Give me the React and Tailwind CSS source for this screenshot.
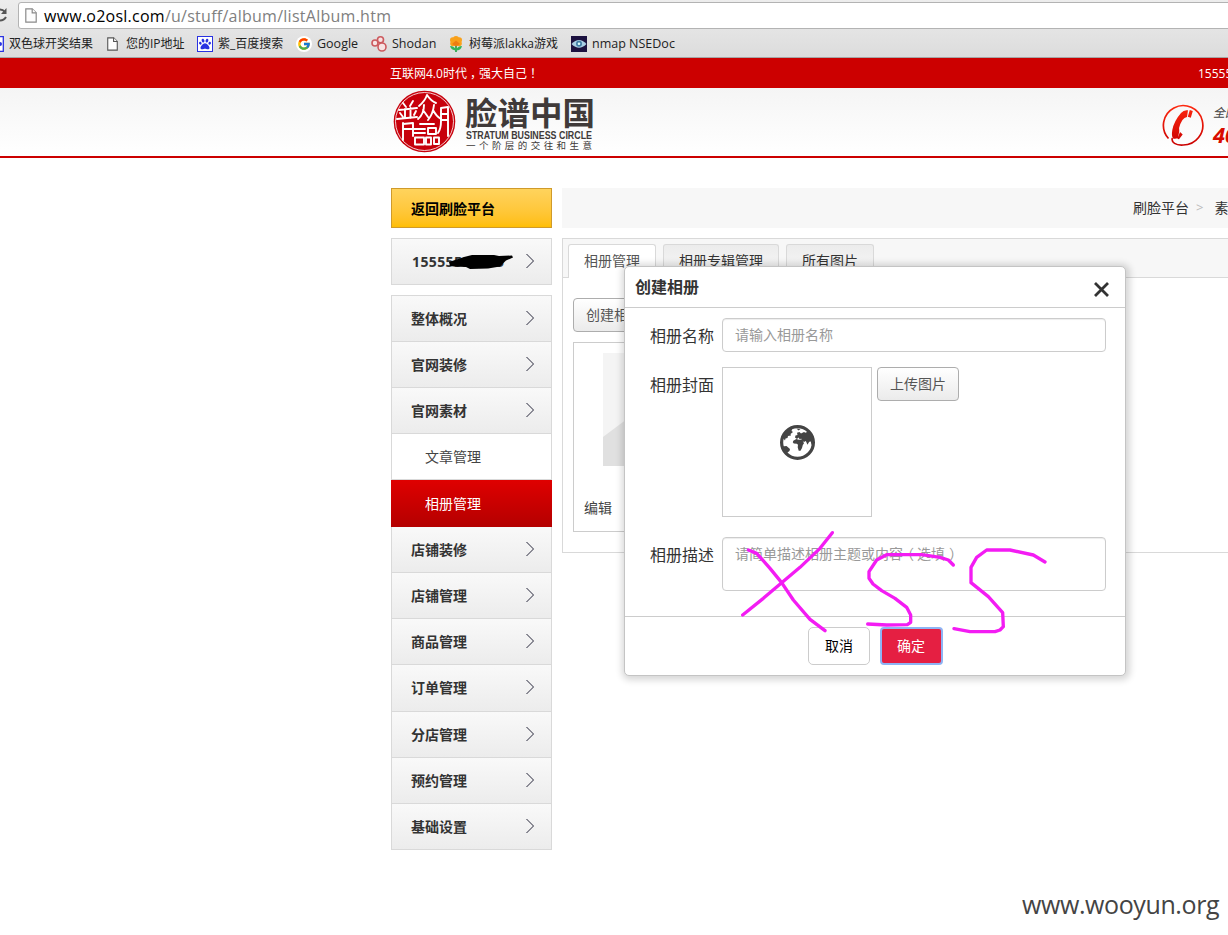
import React from "react";
import { FaPaw } from "react-icons/fa";
import { FcGoogle } from "react-icons/fc";

function PageIcon({ className }) {
  return (
    <svg className={className} viewBox="0 0 12 15" fill="#fdfdfd" stroke="currentColor" strokeWidth="1.2">
      <path d="M.8.8h6.4l4 4v9.4H.8z" />
      <path d="M7.2.8v4h4" />
    </svg>
  );
}

function BrowserBar() {
  return (
    <div className="h-[58px] border-b border-[#a6a6a6] bg-linear-to-b from-[#ededed] to-[#dcdcdc]">
      <div className="flex h-[30px] items-start pt-[2px]">
        <svg className="mt-[5px] h-4 w-[7px] shrink-0" viewBox="0 0 7 16" fill="none" stroke="#555" strokeWidth="2">
          <path d="M0 2.5Q3 2.500 5 5M0 13.500Q4 13.500 6 10" />
          <path d="M6.500 1v6H1z" fill="#555" stroke="none" />
        </svg>
        <div className="ml-[11px] flex h-[27px] w-[1300px] shrink-0 items-center rounded-[3px] border border-[#b3b3b3] bg-white pl-[6px]">
          <PageIcon className="h-[15px] w-3 text-[#8a8a8a]" />
          <span className="ml-[7px] text-[16px] leading-6 whitespace-nowrap text-[#808080]">
            <span className="tracking-[0.24px] text-black">www.o2osl.com</span>
            <span className="tracking-[0.26px]">/u/stuff/album/listAlbum.htm</span>
          </span>
        </div>
      </div>
      <div className="flex h-[27px] items-center pt-px text-[12px] whitespace-nowrap text-[#222]">
        <div className="flex w-[106px] shrink-0 items-center">
          <svg className="h-4 w-1" viewBox="0 0 4 16">
            <path d="M0 .7h3.300v14.600H0" fill="#fff" stroke="#2932e1" strokeWidth="1.300" />
            <circle cx="0" cy="8" r="2" fill="#2932e1" />
          </svg>
          <span className="ml-[5px]">双色球开奖结果</span>
        </div>
        <div className="flex w-[91px] shrink-0 items-center">
          <PageIcon className="ml-[1px] h-[14px] w-[11px] text-[#555]" />
          <span className="ml-[8px]">您的IP地址</span>
        </div>
        <div className="flex w-[99px] shrink-0 items-center">
          <span className="flex size-4 items-center justify-center border border-[#2932e1] bg-white">
            <FaPaw className="size-3 text-[#2932e1]" />
          </span>
          <span className="ml-[5px]">紫_百度搜索</span>
        </div>
        <div className="flex w-[75px] shrink-0 items-center">
          <span className="flex size-4 items-center justify-center rounded-full bg-white">
            <FcGoogle className="size-[14px]" />
          </span>
          <span className="ml-[5px] text-[12.5px]">Google</span>
        </div>
        <div className="flex w-[77px] shrink-0 items-center">
          <svg className="size-4" viewBox="0 0 16 16" fill="#f7e3e3" stroke="#cc5a5e" strokeWidth="1.600">
            <circle cx="4" cy="7" r="3" />
            <circle cx="9.500" cy="3.800" r="3" />
            <circle cx="11" cy="11" r="4" />
          </svg>
          <span className="ml-[5px] text-[12.5px]">Shodan</span>
        </div>
        <div className="flex w-[123px] shrink-0 items-center">
          <svg className="size-4" viewBox="0 0 16 16">
            <path d="M8 9v7" stroke="#2fa84f" strokeWidth="1.800" />
            <path d="M8 14.500Q3 14 2 10q5 0 6 4.500zM8 14.500q5 0 6-4.500-5 0-6 4.500z" fill="#35b558" />
            <g fill="#f9a11b">
              <circle cx="8" cy="3" r="3" />
              <circle cx="4.800" cy="4" r="2.800" />
              <circle cx="11.200" cy="4" r="2.800" />
              <circle cx="5" cy="7.500" r="2.800" />
              <circle cx="11" cy="7.500" r="2.800" />
            </g>
            <path d="M4 8l4-3.500L12 8l-4 2.500z" fill="#ee7d12" />
          </svg>
          <span className="ml-[5px]">树莓派lakka游戏</span>
        </div>
        <div className="flex shrink-0 items-center">
          <svg className="size-4" viewBox="0 0 16 16">
            <path d="M0 0h16v16H0z" fill="#1c1240" />
            <path d="M.5 8Q8 0 15.500 8 8 15.500 .5 8z" fill="#a9cfe4" />
            <circle cx="8" cy="7.800" r="3" fill="#3f7ea6" />
            <circle cx="8" cy="7.800" r="1.300" fill="#dff" />
          </svg>
          <span className="ml-[5px] text-[12.5px]">nmap NSEDoc</span>
        </div>
      </div>
    </div>
  );
}

function Logo() {
  return (
    <svg className="h-[66px] w-[212px] shrink-0" viewBox="0 0 212 66">
      <circle cx="33.500" cy="33.500" r="30.800" fill="#c7000b" />
      <circle cx="33.500" cy="33.500" r="29" fill="none" stroke="#fff" strokeWidth=".8" />
      <g fill="none" stroke="#fff" strokeWidth="1.900" strokeLinecap="round" strokeLinejoin="round">
        <path d="M12 15l3 4M22 13l-3 5M8 22l18-2M14 21v9M19.500 20v10M9 25l3 4M25 23l-2 4M6 31l20-2" />
        <path d="M12 35v17M12 36l10-1v13M12 41h10" />
        <path d="M36 7q-2 6-8 11M36 7q4 6 9 8M33 17q0 9-6 14M32 22l5 7M43 17q-1 9-6 15M42 22q3 6 8 9" />
        <path d="M50 20v13q0 8-3 12M50 20l7-1v29M50 26h6M50 32h6" />
        <path d="M29 36h14M23 41h11M23 45h11M24 49.500h9v7h-9zM37 40h8v6h-8zM35 49.500h5v7h-5zM43 49.500h5v6.500h-5z" />
      </g>
      <g fill="#403a39">
        <text x="74" y="36.500" fontSize="32" fontWeight="700" textLength="130" lengthAdjust="spacingAndGlyphs">脸谱中国</text>
        <text x="75" y="50.500" fontSize="10.500" fontWeight="700" fontFamily="Liberation Sans, sans-serif" textLength="126" lengthAdjust="spacingAndGlyphs">STRATUM BUSINESS CIRCLE</text>
        <text x="75" y="60.500" fontSize="9.500" textLength="126">一个阶层的交往和生意</text>
      </g>
    </svg>
  );
}

function Hotline() {
  return (
    <div className="flex w-[160px] shrink-0 items-start">
      <svg className="mt-[16px] ml-px size-[42px] shrink-0" viewBox="0 0 42 42">
        <defs>
          <linearGradient id="phone" gradientUnits="userSpaceOnUse" x1="0" y1="0" x2="0" y2="42">
            <stop offset="0" stopColor="#ff2a10" />
            <stop offset="1" stopColor="#c90000" />
          </linearGradient>
        </defs>
        <path d="M6.500 34.500A19.700 19.700 0 1 1 21 41C14 41.500 9 38.500 10.300 34" fill="none" stroke="url(#phone)" strokeWidth="1.700" />
        <path d="M26 6.300Q22 5.500 19 9 12 17 10.300 26q-1 6 .7 8.500 2.500.8 5-.5l1.300-7q-.8-3 1-7 1.700-4.500 4.200-6l2.500-1z" fill="url(#phone)" />
        <path d="M27.800 6l3 1-2 6.800-3-1zM18 28l2.700 2.500-3.700 4.700-1.700-.5z" fill="url(#phone)" />
      </svg>
      <div className="ml-[9px] pt-[16px] whitespace-nowrap">
        <div className="text-[12px] leading-[18px] text-[#444] italic">全国服务热线</div>
        <div className="-mt-[2px] font-['Noto_Sans'] text-[22px] leading-[28px] font-bold text-[#d80c00] italic">400-000-0000</div>
      </div>
    </div>
  );
}

function Arrow() {
  return (
    <svg className="-mt-[2px] mr-[17px] h-[14px] w-2 shrink-0" viewBox="0 0 8 14" fill="#8c8c96" shapeRendering="crispEdges">
      <path d="M0 0h2v1H0zM1 1h2v1H1zM2 2h2v1H2zM3 3h2v1H3zM4 4h2v1H4zM5 5h2v1H5zM6 6h2v2H6zM5 8h2v1H5zM4 9h2v1H4zM3 10h2v1H3zM2 11h2v1H2zM1 12h2v1H1zM0 13h2v1H0z" />
    </svg>
  );
}

const MENU = [
  { label: "整体概况", cls: "h-[46px]" },
  { label: "官网装修", cls: "h-[46px]" },
  { label: "官网素材", cls: "h-[46px]" },
  { label: "文章管理", cls: "h-[46px]", sub: true },
  { label: "相册管理", cls: "h-[47px]", active: true },
  { label: "店铺装修", cls: "h-[46px]" },
  { label: "店铺管理", cls: "h-[46px]" },
  { label: "商品管理", cls: "h-[46px]" },
  { label: "订单管理", cls: "h-[47px]" },
  { label: "分店管理", cls: "h-[46px]" },
  { label: "预约管理", cls: "h-[46px]" },
  { label: "基础设置", cls: "h-[46px]" },
];

function MenuItem({ label, cls, sub, active }) {
  if (active) {
    return <li className={`${cls} flex items-center bg-linear-to-b from-[#df0000] to-[#b40000] pl-[34px] text-white`}>{label}</li>;
  }
  if (sub) {
    return <li className={`${cls} flex items-center border-x border-b border-[#d9d9d9] bg-white pl-[33px] text-[#444]`}>{label}</li>;
  }
  return (
    <li className={`${cls} flex items-center justify-between border-x border-b border-[#d9d9d9] bg-linear-to-b from-[#f9f9f9] to-[#ececec] pl-[19px] font-bold text-[#333]`}>
      <span className="pb-px">{label}</span>
      <Arrow />
    </li>
  );
}

function Sidebar() {
  return (
    <aside className="w-[161px] shrink-0 text-[14px]">
      <div className="flex h-10 items-center border border-[#cf9a2b] bg-linear-to-b from-[#ffd35c] to-[#ffbe00] pl-[19px] font-bold text-black">返回刷脸平台</div>
      <div className="relative mt-[10px] flex h-[47px] items-center justify-between border border-[#d9d9d9] bg-linear-to-b from-[#f9f9f9] to-[#ececec] pl-5 font-bold text-[#333]">
        <span className="tracking-[0.4px]">15555555555</span>
        <Arrow />
        <svg className="absolute top-[15px] left-[56px] h-4 w-[66px]" viewBox="0 0 66 16">
          <path d="M1 8L16 3l8-2 22 0 5 1 13-.5 1 2-7 3-4 4-2 2-12 2-18 .5-4-2-12-.5L2 12z" fill="#000" />
        </svg>
      </div>
      <ul className="mt-[10px] border-t border-[#d9d9d9]">
        {MENU.map((m) => (
          <MenuItem key={m.label} {...m} />
        ))}
      </ul>
    </aside>
  );
}

function Main() {
  return (
    <main className="ml-[10px] w-[760px] shrink-0 text-[14px]">
      <div className="flex h-10 items-center bg-[#f7f7f7] pb-[2px] pl-[571px] whitespace-nowrap text-[#333]">
        <span>刷脸平台</span>
        <span className="ml-[7px] pt-px text-[13px] text-[#bbb]">&gt;</span>
        <span className="ml-[11px]">素材管理</span>
      </div>
      <section className="mt-[10px] h-[315px] border border-[#d9d9d9] bg-white">
        <div className="flex h-[39px] items-end gap-[7px] border-b border-[#d9d9d9] bg-[#f7f7f7] pl-[5px] text-[#333]">
          <div className="-mb-px flex h-[34px] w-[88px] items-center justify-center rounded-t-[3px] border border-b-0 border-[#d9d9d9] bg-white pb-[2px] text-[#555]">相册管理</div>
          <div className="flex h-[33px] w-[116px] items-center justify-center rounded-t-[3px] border border-b-0 border-[#d9d9d9] bg-linear-to-b from-[#ececec] to-[#f8f8f8] pb-[2px]">相册专辑管理</div>
          <div className="flex h-[33px] w-[88px] items-center justify-center rounded-t-[3px] border border-b-0 border-[#d9d9d9] bg-linear-to-b from-[#ececec] to-[#f8f8f8] pb-[2px]">所有图片</div>
        </div>
        <div className="px-[10px] pt-5">
          <button className="block h-[34px] w-[82px] rounded-[4px] border border-[#adadad] bg-linear-to-b from-white to-[#ebebeb] pb-[2px] text-[#555]">创建相册</button>
          <div className="mt-[10px] h-[190px] w-[190px] border border-[#ccc] bg-white pt-[10px]">
            <svg className="ml-[29px] h-[113px] w-[130px]" viewBox="0 0 130 113">
              <path d="M0 0h130v113H0z" fill="#f4f4f4" />
              <path d="M0 84l36-27 94 56H0z" fill="#e0e0e0" />
            </svg>
            <div className="mt-[31px] ml-[10px] leading-[21px] text-[#444]">编辑</div>
          </div>
        </div>
      </section>
    </main>
  );
}

function Globe() {
  return (
    <svg className="size-[35px]" viewBox="0 0 35 35" fill="#444">
      <circle cx="17.500" cy="17.500" r="15.900" fill="#fff" stroke="#444" strokeWidth="3.200" />
      <path d="M3 13L4.500 8 9 4l3.500-.5-1 2.500 1.500 1-2.500 2 .5 1.500-3 .5-.5 2-2 .5-.5 2z" />
      <path d="M2 21.500l4.500-.5 3.500 3-.5 2-2 1.500-.5 3L3 26z" />
      <path d="M13.300 15.800l3-1.800 2.500.8 3.200-.3 2 3.700-1.200 1.800-.8 3-1.500 2.800h-1.800l-1-3.500.3-2.500-1.200-1-3-.3-1-1.300z" />
      <path d="M15 12.500l.5-2 2-.5-.5-2.200L19.500 7l1.500 1.500 3-1.500 1.500.8L29 6l4.500 6.500.5 6-2.500 1.200-.7-3.200-1.600.3-1.700 3-1.700-3.800-1.800 1-2.200-1.500-.3-1.800-2 .3-1-1.500-1.500 1.500z" />
      <path d="M16.500 3.500l4 .5-2 1.500z" />
    </svg>
  );
}

function Dialog() {
  return (
    <div className="absolute top-[266px] left-[624px] h-[410px] w-[502px] rounded-[5px] border border-[#c4c4c4] bg-white text-[16px] text-[#333] shadow-[1px_1px_7px_3px_rgba(0,0,0,0.16)]">
      <header className="flex h-[41px] items-center justify-between border-b border-[#ccc] pr-[16px] pl-[10px]">
        <h2 className="font-bold">创建相册</h2>
        <svg className="mt-[5px] size-[15px]" viewBox="0 0 15 15" stroke="#333" strokeWidth="2.800">
          <path d="M1 1l13 13M14 1L1 14" />
        </svg>
      </header>
      <div className="flex h-[309px] flex-col border-b border-[#ccc] pt-[10px] pl-[25px]">
        <div className="flex h-[49px] gap-2">
          <label className="mt-[6px] w-16 leading-6">相册名称</label>
          <div className="flex h-[34px] w-[384px] items-center rounded-[4px] border border-[#ccc] px-3 pb-[2px] text-[14px] text-[#999] shadow-[inset_0_1px_1px_rgba(0,0,0,0.075)]">请输入相册名称</div>
        </div>
        <div className="flex h-[170px] gap-2">
          <label className="mt-[6px] w-16 leading-6">相册封面</label>
          <div className="flex h-[150px] w-[150px] items-center justify-center border border-[#ccc]">
            <Globe />
          </div>
          <button className="-ml-[3px] h-[34px] w-[82px] rounded-[4px] border border-[#adadad] bg-linear-to-b from-white to-[#ebebeb] pb-[2px] text-[14px] text-[#555]">上传图片</button>
        </div>
        <div className="flex gap-2">
          <label className="mt-[6px] w-16 leading-6">相册描述</label>
          <div className="h-[54px] w-[384px] rounded-[4px] border border-[#ccc] px-3 pt-[6px] text-[14px] leading-5 text-[#999] shadow-[inset_0_1px_1px_rgba(0,0,0,0.075)]">
            请简单描述相册主题或内容<span className="inline-block -translate-x-[3px]">（</span>选填<span className="inline-block translate-x-[4px]">）</span>
          </div>
        </div>
      </div>
      <footer className="flex gap-[10px] pt-[10px] pl-[183px] text-[14px]">
        <button className="h-[38px] w-[62px] rounded-[5px] border border-[#ccc] bg-white pb-[2px] text-black">取消</button>
        <button className="h-[38px] w-[63px] rounded-[4px] border-2 border-[#8eb4f4] bg-[#e51f42] pr-px pb-[2px] text-white">确定</button>
      </footer>
    </div>
  );
}

function Doodle() {
  return (
    <svg className="absolute top-[520px] left-[720px] h-[165px] w-[410px]" viewBox="0 0 1230 495" fill="none" stroke="#f31cf3" strokeWidth="10" strokeLinecap="round" strokeLinejoin="round">
      <path d="M85 90l25 10 40 45 35 43 35 52 50 58 45 34" />
      <path d="M337 38l-37 47-60 57-55 46-55 47-62 50" />
      <path d="M700 135l-15-15-25-8-55-8H500l-30 16-23 35v20l12 17 26 20 40 23 35 27 12 23v22l-10 7-62 1-57-3" />
      <path d="M975 126l-35-21-70-15h-70l-30 22-17 30v46l52 42 43 48 2 42-10 10-15 5h-75l-48-9" />
    </svg>
  );
}

export default function App() {
  return (
    <div className="relative h-[935px] w-full overflow-hidden bg-white font-['Open_Sans','Noto_Sans_CJK_SC',sans-serif]">
      <BrowserBar />
      <div className="flex h-[30px] items-center bg-[#cc0000] pt-px pl-[390px] text-[12px] whitespace-nowrap text-white">
        <span className="w-[808px] shrink-0">
          互联网4.0时代<span className="inline-block translate-x-[3px]">，</span>强大自己<span className="inline-block translate-x-[3px]">！</span>
        </span>
        <span>15555555555</span>
      </div>
      <header className="flex h-[70px] items-start border-b-2 border-[#cc0000] bg-linear-to-b from-[#f5f5f5] to-white pl-[391px]">
        <Logo />
        <div className="w-[558px] shrink-0" />
        <Hotline />
      </header>
      <div className="flex pt-[30px] pl-[391px]">
        <Sidebar />
        <Main />
      </div>
      <Dialog />
      <Doodle />
      <div className="absolute top-[886px] left-[1022px] text-[25px] leading-[36px] tracking-[-0.4px] whitespace-nowrap text-[#444]">www.wooyun.org</div>
    </div>
  );
}
